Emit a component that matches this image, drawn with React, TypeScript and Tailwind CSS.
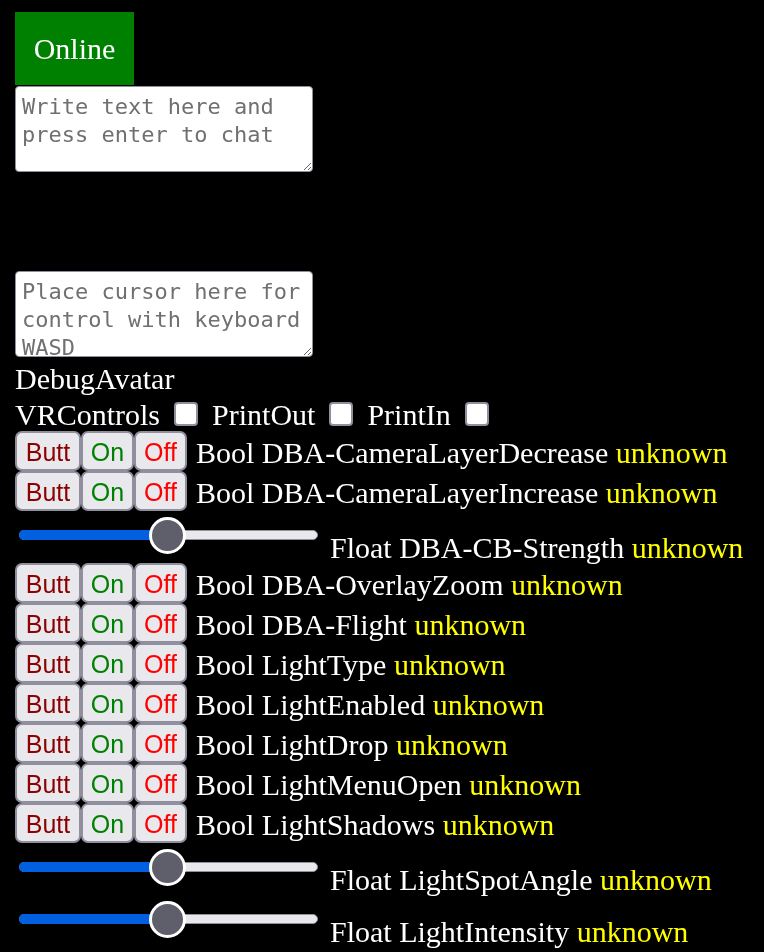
import { type ReactNode } from "react";

type Row = { kind: "bool" | "float"; name: string };

const rows: Row[] = [
  { kind: "bool", name: "DBA-CameraLayerDecrease" },
  { kind: "bool", name: "DBA-CameraLayerIncrease" },
  { kind: "float", name: "DBA-CB-Strength" },
  { kind: "bool", name: "DBA-OverlayZoom" },
  { kind: "bool", name: "DBA-Flight" },
  { kind: "bool", name: "LightType" },
  { kind: "bool", name: "LightEnabled" },
  { kind: "bool", name: "LightDrop" },
  { kind: "bool", name: "LightMenuOpen" },
  { kind: "bool", name: "LightShadows" },
  { kind: "float", name: "LightSpotAngle" },
  { kind: "float", name: "LightIntensity" },
];

const Btn = ({ children, className }: { children: ReactNode; className: string }) => (
  <button
    className={`flex h-[40px] items-center justify-center rounded-[7px] border-2 border-[#8f8f9d] bg-[#e9e9ed] pt-[3px] font-['Liberation_Sans',Arial,sans-serif] text-[25px] ${className}`}
  >
    {children}
  </button>
);

const Label = ({ type, name }: { type: string; name: string }) => (
  <span className="whitespace-nowrap">
    {type} {name} <span className="text-[#ffff00]">unknown</span>
  </span>
);

const BoolRow = ({ name }: { name: string }) => (
  <div className="flex h-[40px] items-center">
    <Btn className="w-[66px] text-[#8b0000]">Butt</Btn>
    <Btn className="w-[53px] text-[#008000]">On</Btn>
    <Btn className="w-[53px] text-[#ff0000]">Off</Btn>
    <div className="ml-[9px] pt-[3px]">
      <Label type="Bool" name={name} />
    </div>
  </div>
);

const Slider = () => (
  <div className="relative h-[52px] w-[307px] shrink-0">
    <div className="absolute left-[4px] top-[19px] h-[10px] w-[299px] rounded-full border border-[#8f8f9d] bg-[#e9e9ed]" />
    <div className="absolute left-[4px] top-[19px] h-[10px] w-[150px] rounded-l-full bg-[#0060df]" />
    <div className="absolute left-[134px] top-[6px] h-[37px] w-[37px] rounded-full border-[3px] border-white bg-[#5f5f6b]" />
  </div>
);

const FloatRow = ({ name }: { name: string }) => (
  <div className="flex h-[52px]">
    <Slider />
    <div className="ml-[8px] -mb-[2px] flex items-end leading-[34px]">
      <Label type="Float" name={name} />
    </div>
  </div>
);

const Check = () => (
  <input
    type="checkbox"
    className="mx-[14px] h-[24px] w-[24px] appearance-none rounded-[4px] border-2 border-[#8f8f9d] bg-white"
  />
);

const App = () => {
  return (
    <div className="min-h-[952px] bg-black px-[15px] pt-[12px] font-['Liberation_Serif','Times_New_Roman',serif] text-[30px] text-white">
      <div className="flex h-[73px] w-[119px] items-center justify-center bg-[#008000]">
        Online
      </div>
      <textarea
        placeholder="Write text here and press enter to chat"
        className="mt-[1px] block h-[86px] w-[298px] rounded-[4px] border border-[#8f8f9d] bg-white px-[6px] py-[6px] font-['DejaVu_Sans_Mono',monospace] text-[22px] leading-[28px] text-black placeholder:text-[#707070]"
      />
      <div className="h-[99px]" />
      <textarea
        placeholder="Place cursor here for control with keyboard WASD"
        className="block h-[86px] w-[298px] rounded-[4px] border border-[#8f8f9d] bg-white px-[6px] py-[6px] font-['DejaVu_Sans_Mono',monospace] text-[22px] leading-[28px] text-black placeholder:text-[#707070]"
      />
      <div className="h-[40px] pt-[5px] leading-[34px]">DebugAvatar</div>
      <div className="flex h-[34px] items-center">
        <span>VRControls</span>
        <Check />
        <span>PrintOut</span>
        <Check />
        <span>PrintIn</span>
        <Check />
      </div>
      {rows.map((row) =>
        row.kind === "bool" ? (
          <BoolRow key={row.name} name={row.name} />
        ) : (
          <FloatRow key={row.name} name={row.name} />
        ),
      )}
    </div>
  );
};

export default App;
